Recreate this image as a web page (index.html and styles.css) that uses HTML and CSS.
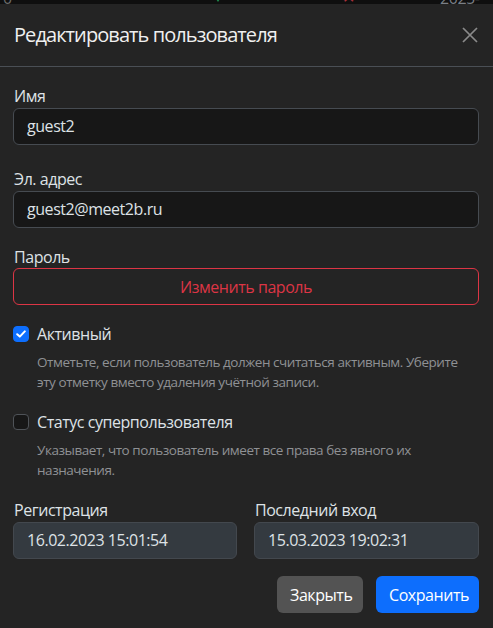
FILE: index.html
```html
<!DOCTYPE html>
<html lang="ru">
<head>
<meta charset="utf-8">
<title>Редактировать пользователя</title>
<link rel="stylesheet" href="styles.css">
</head>
<body>
<div class="backdrop">
  <span class="bd-item bd-num">0</span>
  <span class="bd-item bd-up"></span>
  <span class="bd-item bd-x">✕</span>
  <span class="bd-item bd-date">2025-03</span>
</div>
<div class="modal">
  <div class="modal-header">
    <h5 class="modal-title">Редактировать пользователя</h5>
    <button class="btn-close" type="button" aria-label="Закрыть">
      <svg width="16" height="16" viewBox="0 0 16 16"><path d="M1 1L15 15M15 1L1 15" stroke="#8a8a8a" stroke-width="1.7" fill="none"/></svg>
    </button>
  </div>
  <div class="modal-body">
    <div class="field field-name">
      <label class="form-label">Имя</label>
      <div class="form-control">guest2</div>
    </div>
    <div class="field field-email">
      <label class="form-label">Эл. адрес</label>
      <div class="form-control">guest2@meet2b.ru</div>
    </div>
    <div class="field field-pass">
      <label class="form-label">Пароль</label>
      <button class="btn-outline-danger" type="button">Изменить пароль</button>
    </div>
    <div class="check check-active">
      <div class="check-row">
        <span class="check-box checked">
          <svg width="10" height="8" viewBox="0 0 10 8"><path d="M1.2 4.2L3.8 6.6L8.8 1.4" stroke="#fff" stroke-width="2" fill="none" stroke-linecap="round" stroke-linejoin="round"/></svg>
        </span>
        <span class="check-label">Активный</span>
      </div>
      <div class="form-text">Отметьте, если пользователь должен считаться активным. Уберите эту отметку вместо удаления учётной записи.</div>
    </div>
    <div class="check check-super">
      <div class="check-row">
        <span class="check-box"></span>
        <span class="check-label">Статус суперпользователя</span>
      </div>
      <div class="form-text">Указывает, что пользователь имеет все права без явного их назначения.</div>
    </div>
    <div class="dates">
      <div class="date-col">
        <label class="form-label">Регистрация</label>
        <div class="form-control disabled">16.02.2023 15:01:54</div>
      </div>
      <div class="date-col">
        <label class="form-label">Последний вход</label>
        <div class="form-control disabled">15.03.2023 19:02:31</div>
      </div>
    </div>
  </div>
  <div class="modal-footer">
    <button class="btn btn-secondary" type="button">Закрыть</button>
    <button class="btn btn-primary" type="button">Сохранить</button>
  </div>
</div>
</body>
</html>
```
FILE: styles.css
```css
* { box-sizing: border-box; }
html, body { margin: 0; padding: 0; }
body {
  background: #242424;
  font-family: "Open Sans", "Noto Sans", sans-serif;
  color: #dee2e6;
  font-size: 16px;
  letter-spacing: -0.45px;
  width: 493px;
  height: 628px;
  overflow: hidden;
}
.backdrop {
  position: relative;
  height: 4px;
  background: #0f0f0f;
  overflow: hidden;
}
.bd-item { position: absolute; top: -13px; color: #6c6c6c; font-size: 16px; }
.bd-num { left: 3px; }
.bd-up {
  left: 214px; top: -4px; width: 0; height: 0;
  border-left: 4px solid transparent; border-right: 4px solid transparent;
  border-top: 6px solid #1f8a4c;
}
.bd-x { left: 342px; color: #a8313c; top: -14px; }
.bd-date { left: 440px; color: #7a7f86; }

.modal { background: #242424; }
.modal-header {
  display: flex;
  align-items: center;
  justify-content: space-between;
  padding: 16px 14px 16px 14px;
  border-bottom: 1px solid #4a4f55;
  height: 63px;
}
.modal-title {
  margin: 0;
  font-size: 20px;
  font-weight: 400;
  line-height: 30px;
  color: #f0f0f0;
  letter-spacing: -0.92px;
}
.btn-close {
  background: none;
  border: 0;
  padding: 0;
  width: 16px;
  height: 16px;
  margin-right: 1px;
  display: flex;
}
.modal-body { padding: 17px 14px 0 13px; }
.form-label {
  display: block;
  line-height: 24px;
  height: 24px;
  padding-left: 1px;
  color: #dee2e6;
}
.form-control {
  height: 37px;
  line-height: 35px;
  padding: 0 12px 0 13px;
  background: #171717;
  border: 1px solid #464b51;
  border-radius: 6px;
  color: #dee2e6;
}
.form-control.disabled { background: #343a40; border-color: #43484e; }
.field-name { margin-bottom: 22px; }
.field-email { margin-bottom: 17px; }
.field-pass { margin-bottom: 17px; }
.field-pass .form-label { height: 23px; }
.btn-outline-danger {
  display: block;
  width: 100%;
  height: 37px;
  background: transparent;
  border: 1px solid #dc3545;
  border-radius: 6px;
  color: #dc3545;
  font-family: inherit;
  font-size: 16px;
  letter-spacing: -0.45px;
}
.check-row { display: flex; align-items: flex-start; height: 24px; }
.check-box {
  width: 16px; height: 16px;
  margin-top: 4px;
  margin-right: 8px;
  border-radius: 4px;
  background: #171717;
  border: 1px solid #4f5358;
  display: flex; align-items: center; justify-content: center;
  flex: none;
}
.check-box.checked { background: #0d6efd; border-color: #0d6efd; }
.check-label { line-height: 24px; color: #dee2e6; }
.form-text {
  margin-top: 6px;
  padding-left: 24px;
  font-size: 13.5px;
  line-height: 20px;
  color: #8f9194;
  letter-spacing: -0.45px;
}
.check-active { margin-bottom: 18px; }
.check-super { margin-bottom: 18px; }
.dates {
  display: grid;
  grid-template-columns: 224px 225px;
  column-gap: 17px;
}
.modal-footer {
  display: flex;
  justify-content: flex-end;
  gap: 13px;
  padding: 17px 14px 15px 0;
}
.btn {
  height: 37px;
  border: 0;
  border-radius: 6px;
  font-family: inherit;
  font-size: 16px;
  letter-spacing: -0.45px;
  color: #fff;
  padding: 0 13px;
}
.btn-secondary { background: #535353; width: 86px; }
.btn-primary { background: #0d6efd; width: 103px; }
```
